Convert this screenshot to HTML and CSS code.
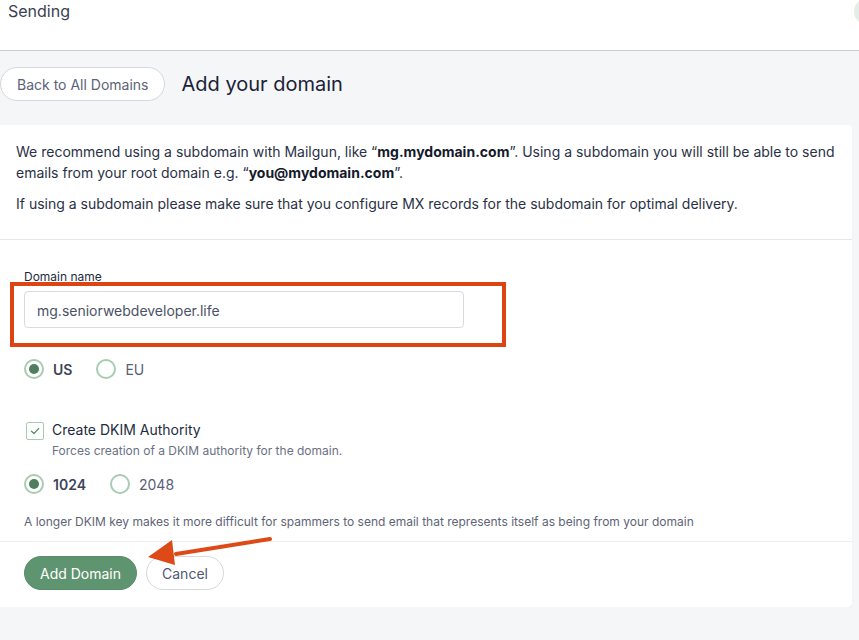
FILE: index.html
```html
<!DOCTYPE html>
<html>
<head>
    <title>Add your domain</title>
    <link rel="stylesheet" href="styles.css">
</head>
<body>
    <header class="topbar">
        <span class="topbar-title">Sending</span>
        <span class="avatar"></span>
    </header>

    <main class="page">
        <div class="page-head">
            <button class="btn-outline back">Back to All Domains</button>
            <h1>Add your domain</h1>
        </div>

        <section class="card">
            <div class="card-intro">
                <p>We recommend using a subdomain with Mailgun, like “<b>mg.mydomain.com</b>”. Using a subdomain you will still be able to send emails from your root domain e.g. “<b>you@mydomain.com</b>”.</p>
                <p>If using a subdomain please make sure that you configure MX records for the subdomain for optimal delivery.</p>
            </div>

            <div class="card-form">
                <div class="field">
                    <label class="field-label">Domain name</label>
                    <div class="input">mg.seniorwebdeveloper.life</div>
                    <span class="highlight"></span>
                </div>

                <div class="radios">
                    <span class="radio on"><i></i>US</span>
                    <span class="radio"><i></i>EU</span>
                </div>

                <div class="check-row">
                    <span class="checkbox">
                        <svg width="12" height="12" viewBox="0 0 12 12"><path d="M2.5 6.2 L5 8.6 L9.6 3.6" fill="none" stroke="#5a8f6b" stroke-width="1.4" stroke-linecap="round" stroke-linejoin="round"/></svg>
                    </span>
                    <div>
                        <div class="check-label">Create DKIM Authority</div>
                        <div class="check-help">Forces creation of a DKIM authority for the domain.</div>
                    </div>
                </div>

                <div class="radios dkim">
                    <span class="radio on"><i></i>1024</span>
                    <span class="radio"><i></i>2048</span>
                </div>

                <p class="note">A longer DKIM key makes it more difficult for spammers to send email that represents itself as being from your domain</p>
            </div>

            <div class="card-actions">
                <button class="btn-primary">Add Domain</button>
                <button class="btn-outline">Cancel</button>
                <svg class="arrow" width="130" height="40" viewBox="0 0 130 40">
                    <path d="M124 4 L30 19" stroke="#dd4a17" stroke-width="4" stroke-linecap="round"/>
                    <path d="M2 22 L26 5 L29 30 Z" fill="#dd4a17"/>
                </svg>
            </div>
        </section>
    </main>
</body>
</html>
```

FILE: styles.css
```css
body {
    margin: 0;
    background: #f5f6f8;
    font-family: Inter, 'Liberation Sans', sans-serif;
    color: #242b3d;
}

.topbar {
    height: 50px;
    background: #fff;
    border-bottom: 1px solid #cccccc;
    position: relative;
}
.topbar-title {
    display: inline-block;
    margin: 1px 0 0 8px;
    font-size: 16px;
    color: #3b4152;
}
.avatar {
    position: absolute;
    right: -22px;
    top: -2px;
    width: 27px;
    height: 27px;
    border-radius: 50%;
    background: #e2eee6;
}

.page {
    padding-right: 7px;
}
.page-head {
    display: flex;
    align-items: center;
    height: 66px;
    margin-bottom: 8px;
}
.page-head h1 {
    margin: 0 0 0 16px;
    font-size: 20px;
    font-weight: 400;
    color: #1b2236;
}

button {
    font-family: inherit;
    font-size: 14px;
    border-radius: 20px;
    height: 34px;
    cursor: pointer;
}
.btn-outline {
    background: #fff;
    border: 1px solid #d6d8dc;
    color: #505874;
    padding: 0 15px;
}
.back {
    color: #5b6378;
    padding: 0 16px;
}
.btn-primary {
    background: #5f9470;
    border: 1px solid #5a8d6a;
    color: #fff;
    padding: 0 15px;
}

.card {
    background: #fff;
    border-radius: 0 4px 4px 0;
    box-shadow: 0 1px 1px rgba(0, 0, 0, 0.08);
}
.card-intro {
    padding: 16px 16px 25px;
    border-bottom: 1px solid #e6e7ea;
    font-size: 14px;
    line-height: 21px;
    color: #2a3145;
}
.card-intro p {
    margin: 0 0 10px;
}
.card-intro p:last-child {
    margin-bottom: 0;
}
.card-intro b {
    color: #141a2b;
}

.card-form {
    padding: 29px 24px 12px;
}
.field {
    position: relative;
    width: 440px;
}
.field-label {
    display: block;
    font-size: 12px;
    color: #242b3d;
    margin-bottom: 7px;
}
.input {
    height: 37px;
    border: 1px solid #d8dbe0;
    border-radius: 4px;
    padding: 0 12px;
    font-size: 14px;
    line-height: 37px;
    color: #4b5266;
    box-sizing: border-box;
}
.highlight {
    position: absolute;
    left: -14px;
    top: 13px;
    width: 488px;
    height: 57px;
    border: 4px solid #dc4414;
}

.radios {
    display: flex;
    gap: 24px;
    margin-top: 31px;
    height: 20px;
    align-items: center;
}
.radio {
    display: flex;
    align-items: center;
    gap: 9px;
    font-size: 14px;
    color: #596075;
}
.radio i {
    width: 16px;
    height: 16px;
    border: 2px solid #a8cbb2;
    border-radius: 50%;
    box-sizing: content-box;
    position: relative;
}
.radio.on {
    font-weight: 600;
    color: #3c4459;
}
.radio.on i::after {
    content: '';
    position: absolute;
    left: 3px;
    top: 3px;
    width: 10px;
    height: 10px;
    border-radius: 50%;
    background: #4f7e5d;
}

.check-row {
    display: flex;
    gap: 8px;
    margin-top: 42px;
}
.checkbox {
    width: 16px;
    height: 16px;
    margin: 1px 0 0 2px;
    border: 1px solid #a8cbb2;
    border-radius: 2px;
    display: flex;
    align-items: center;
    justify-content: center;
}
.check-label {
    font-size: 14px;
    color: #242b3d;
    line-height: 18px;
}
.check-help {
    font-size: 12px;
    color: #6b7182;
    margin-top: 4px;
}
.radios.dkim {
    margin-top: 16px;
}

.note {
    margin: 20px 0 0;
    font-size: 12px;
    color: #5e6476;
}

.card-actions {
    position: relative;
    display: flex;
    gap: 9px;
    border-top: 1px solid #ecedef;
    padding: 14px 24px 17px;
}
.arrow {
    position: absolute;
    left: 146px;
    top: -7px;
}
```
